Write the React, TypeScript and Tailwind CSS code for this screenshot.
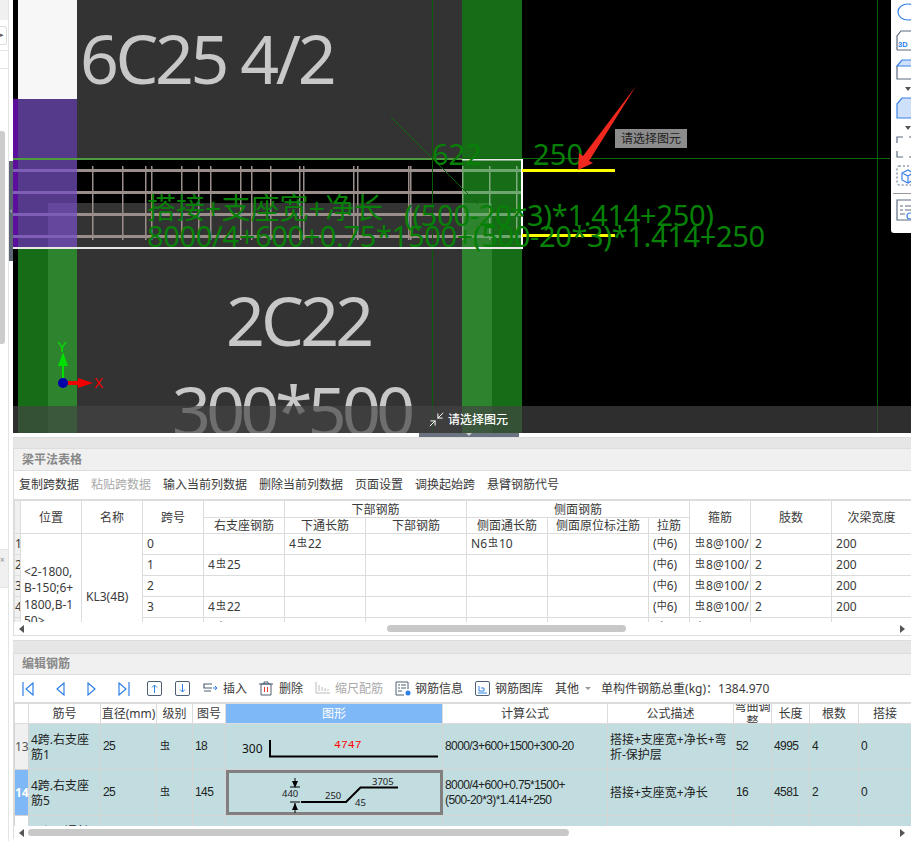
import { Minimize2 } from 'lucide-react';
import type { ReactNode } from 'react';

function Hrb() {
	return <span className="relative top-[-2px] mx-[1px] text-[10px]">虫</span>;
}
function Hpb() {
	return <span className="relative top-[-2px] text-[10px]">中</span>;
}

const verticals = [92, 122, 145, 151, 181, 198, 210, 240, 251, 270, 299, 303, 353, 357, 408, 410, 462, 489, 516];

function CadDrawing() {
	const rows = [170, 192, 214, 236];
	return (
		<svg className="block" width={898} height={433} viewBox="13 0 898 433">
			<rect x={13} y={0} width={898} height={433} fill="#000" />
			<rect x={18} y={0} width={59} height={99} fill="#f7f7f7" />
			<rect x={77} y={0} width={385} height={160} fill="#333" />
			<rect x={77} y={248} width={385} height={185} fill="#333" />
			<rect x={462} y={0} width={60} height={433} fill="#176c17" />
			<rect x={462} y={203} width={30} height={230} fill="#2e832e" />
			<rect x={18} y={248} width={30} height={185} fill="#176c17" />
			<rect x={48} y={248} width={29} height={185} fill="#2e832e" />
			<rect x={13} y={99} width={5} height={148} fill="#5b0f9c" />
			<rect x={18} y={99} width={59} height={148} fill="#553a8c" />
			<rect x={48} y={203} width={29} height={44} fill="#66479e" />
			<rect x={77} y={203} width={385} height={44} fill="#333" />

			{verticals.map((x) => (
				<rect key={x} x={x} y={166} width={1.5} height={74} fill={x >= 462 ? '#7fa97f' : '#9c8f8b'} />
			))}
			{rows.map((y) => (
				<g key={y}>
					<rect x={13} y={y - 1} width={64} height={3} fill="#7f5fb5" />
					<rect x={77} y={y - 1} width={385} height={3} fill="#9a8e8a" />
					<rect x={462} y={y - 1} width={60} height={3} fill="#6fa56f" />
				</g>
			))}

			<rect x={13} y={158} width={877} height={1} fill="#0a6a0a" />
			<rect x={13} y={158} width={449} height={2} fill="#4f9a3f" />
			<rect x={432} y={0} width={1} height={433} fill="#0a5c0a" />
			<rect x={877} y={0} width={1} height={433} fill="#0a5c0a" />
			<line x1={391} y1={117} x2={478} y2={204} stroke="#0a6a0a" strokeWidth={1} />

			<rect x={13} y={247} width={510} height={2} fill="#e8e8e8" />
			<rect x={462} y={159} width={61} height={1.5} fill="#e8e8e8" />
			<rect x={521} y={159} width={2} height={90} fill="#fff" />

			<rect x={522} y={169} width={93} height={3} fill="#ffff00" />
			<rect x={522} y={234} width={93} height={3} fill="#ffff00" />

			<g fontFamily="'Noto Sans', sans-serif" fill="#c8c8c8" fontSize={68}>
				<text x={80} y={84} letterSpacing={-3.4}>6C25 4/2</text>
				<text x={226} y={346} letterSpacing={-3.8}>2C22</text>
				<text x={172} y={436} letterSpacing={-4.6}>300*500</text>
			</g>

			<g fontFamily="'Noto Sans', 'Noto Sans CJK SC', sans-serif" fill="#078007" fontSize={29}>
				<text x={432} y={165}>622</text>
				<text x={533} y={165} textLength={50}>250</text>
				<text x={147} y={219}>搭接+支座宽+净长</text>
				<text x={404} y={226} textLength={310}>((500-20*3)*1.414+250)</text>
				<text x={147} y={247} textLength={618}>8000/4+600+0.75*1500+(500-20*3)*1.414+250</text>
			</g>

			<polygon points="636,86 589,161 593,163 578,170 579,153 583,156" fill="#f0281e" />

			{/* axis marker */}
			<rect x={62} y={358} width={2} height={25} fill="#00e000" />
			<polygon points="63,352 68,366 58,366" fill="#00e000" />
			<rect x={63} y={381} width={22} height={4} fill="#f00000" />
			<polygon points="93,383 78,378 78,388" fill="#f00000" />
			<circle cx={63} cy={383} r={5} fill="#0000a8" />
			<text x={57.5} y={352} fontSize={14} fill="#00e000" fontFamily="'Liberation Sans', sans-serif">Y</text>
			<text x={94} y={388} fontSize={14} fill="#f00000" fontFamily="'Liberation Sans', sans-serif">X</text>
		</svg>
	);
}

function SideTools() {
	const stroke = '#5b6b80';
	return (
		<svg width={20} height={233} viewBox="891 0 20 233">
			<ellipse cx={908} cy={12} rx={10} ry={8} fill="none" stroke="#3b82e8" strokeWidth={1.2} />
			<path d="M897 50V36l4-5h12M897 50h14" fill="none" stroke={stroke} strokeWidth={1.2} />
			<text x={898} y={47} fontSize={7.5} fontWeight={700} fill="#2b7de9" fontFamily="'Liberation Sans', sans-serif">3D</text>
			<path d="M897 66l5-6h10v6z" fill="#cfe0fa" stroke="#3b82e8" strokeWidth={1.2} />
			<path d="M897 66v13h14" fill="none" stroke={stroke} strokeWidth={1.2} />
			<polygon points="905,87 911,87 908,91" fill="#555" />
			<path d="M897 104l5-6h10v20h-15z" fill="#cfe0fa" stroke="#3b82e8" strokeWidth={1.2} />
			<polygon points="905,126 911,126 908,130" fill="#555" />
			<path d="M897 143v-6h6M897 151v6h6M909 137h3M909 157h3" fill="none" stroke={stroke} strokeWidth={1.2} />
			<rect x={897} y={166} width={20} height={19} rx={2} fill="none" stroke={stroke} strokeWidth={1} strokeDasharray="2 2" />
			<path d="M902 173l6-3 5 3v7l-5 3-6-3zM902 173l6 3 5-3M908 176v7" fill="none" stroke="#3b82e8" strokeWidth={1.2} />
			<rect x={893} y={193} width={18} height={1} fill="#999" />
			<path d="M911 200h-14v20h14" fill="none" stroke={stroke} strokeWidth={1.2} />
			<path d="M900 206h3M905 206h6M900 210h3M905 210h6M900 214h5" stroke={stroke} strokeWidth={1} />
			<circle cx={910} cy={216} r={3} fill="none" stroke="#3b82e8" strokeWidth={1.2} />
		</svg>
	);
}

function Viewport() {
	return (
		<div className="relative h-[433px] overflow-hidden">
			<CadDrawing />
			<div className="absolute bottom-0 left-0 right-0 flex h-[27px] items-center bg-[rgba(68,68,68,0.68)] pl-[415px]">
				<Minimize2 size={17} strokeWidth={1.4} className="mr-[3px] text-white" />
				<span className="text-[12px] font-medium text-white">请选择图元</span>
			</div>
			<div className="absolute left-[602px] top-[129px] bg-[#8c8c8c] px-[6px] text-[12px] leading-[19px] text-[#222]">
				请选择图元
			</div>
			<div className="absolute right-0 top-0 h-[233px] w-5 overflow-hidden rounded-bl-[3px] bg-white">
				<SideTools />
			</div>
		</div>
	);
}

function ScrollBar({ left, width }: { left: number; width: number }) {
	return (
		<div className="relative h-[13px] bg-white">
			<span className="absolute left-[5px] top-[3px] border-y-[4px] border-r-[5px] border-y-transparent border-r-[#555]" />
			<span className="absolute right-[6px] top-[3px] border-y-[4px] border-l-[5px] border-y-transparent border-l-[#555]" />
			<div className="absolute top-[3px] h-[7px] rounded-full bg-[#c8c8c8]" style={{ left, width }} />
		</div>
	);
}

const beamCols = [6, 61, 61, 61, 81, 81, 101, 81, 101, 41, 61, 81, 80];
const beamRows: { n: string; span: string; right?: ReactNode; through?: ReactNode; side?: ReactNode }[] = [
	{ n: '1', span: '0', through: <>4<Hrb />22</>, side: <>N6<Hrb />10</> },
	{ n: '2', span: '1', right: <>4<Hrb />25</> },
	{ n: '3', span: '2' },
	{ n: '4', span: '3', right: <>4<Hrb />22</> },
	{ n: '5', span: '4', right: <>4<Hrb />22</> },
	{ n: '6', span: '5' },
];

function BeamTable() {
	const th = 'border border-[#dcdcdc] px-1 text-center text-[12px] font-normal leading-[15px] text-[#3a3a3a]';
	const td = 'h-[21px] overflow-hidden whitespace-nowrap border border-[#dcdcdc] px-[4px] py-0 text-[12px] leading-[20px] text-[#3a3a3a]';
	return (
		<div className="h-[122px] overflow-hidden">
			<table className="w-[897px] table-fixed border-collapse">
				<colgroup>
					{beamCols.map((w, i) => (
						<col key={i} style={{ width: w }} />
					))}
				</colgroup>
				<thead>
					<tr className="h-[17px]">
						<th rowSpan={2} className={`${th} bg-[#f0f0f0]`} />
						<th rowSpan={2} className={th}>位置</th>
						<th rowSpan={2} className={th}>名称</th>
						<th rowSpan={2} className={th}>跨号</th>
						<th className={th} />
						<th colSpan={2} className={th}>下部钢筋</th>
						<th colSpan={3} className={th}>侧面钢筋</th>
						<th rowSpan={2} className={th}>箍筋</th>
						<th rowSpan={2} className={th}>肢数</th>
						<th rowSpan={2} className={th}>次梁宽度</th>
					</tr>
					<tr className="h-[16px]">
						<th className={th}>右支座钢筋</th>
						<th className={th}>下通长筋</th>
						<th className={th}>下部钢筋</th>
						<th className={th}>侧面通长筋</th>
						<th className={th}>侧面原位标注筋</th>
						<th className={th}>拉筋</th>
					</tr>
				</thead>
				<tbody>
					{beamRows.map((r, i) => (
						<tr key={r.n} className="h-[21px]">
							<td className={`${td} !px-0 bg-[#f0f0f0]`}>{r.n}</td>
							{i === 0 && (
								<>
									<td rowSpan={6} className="border border-[#dcdcdc] px-[3px] text-[12px] leading-[16.5px] text-[#3a3a3a]">
										&lt;2-1800,
										<br />
										B-150;6+
										<br />
										1800,B-1
										<br />
										50&gt;
									</td>
									<td rowSpan={6} className="border border-[#dcdcdc] px-[4px] text-[12px] text-[#3a3a3a]">KL3(4B)</td>
								</>
							)}
							<td className={td}>{r.span}</td>
							<td className={td}>{r.right}</td>
							<td className={td}>{r.through}</td>
							<td className={td} />
							<td className={td}>{r.side}</td>
							<td className={td} />
							<td className={td}>(<Hpb />6)</td>
							<td className={td}><Hrb />8@100/</td>
							<td className={td}>2</td>
							<td className={td}>200</td>
						</tr>
					))}
				</tbody>
			</table>
		</div>
	);
}

function BendShape() {
	return (
		<svg width={217} height={45} viewBox="225 723 217 45" className="block">
			<text x={241} y={752} fontSize={12} fill="#111" fontFamily="'Noto Sans', sans-serif">300</text>
			<path d="M269 739v16.5h168" fill="none" stroke="#000" strokeWidth={2} />
			<text x={333} y={747} fontSize={11.5} fill="#f00" fontFamily="'Liberation Mono', monospace">4747</text>
		</svg>
	);
}

function CrankShape() {
	return (
		<svg width={217} height={45} viewBox="225 769 217 45" className="block">
			<rect x={226.5} y={770.5} width={214} height={42} fill="none" stroke="#808080" strokeWidth={3} />
			<path d="M300 801h45l14.5-14.5H397" fill="none" stroke="#000" strokeWidth={2} />
			<path d="M294 777v8M289 786h10M294 802v10M289 801h10" stroke="#000" strokeWidth={1} fill="none" />
			<polygon points="294,787 291,780 297,780" fill="#000" />
			<polygon points="294,802 291,809 297,809" fill="#000" />
			<g fontSize={9.5} fill="#222" fontFamily="'Noto Sans', sans-serif">
				<text x={281} y={796}>440</text>
				<text x={324} y={798}>250</text>
				<text x={371} y={784}>3705</text>
				<text x={354} y={805}>45</text>
			</g>
		</svg>
	);
}

const barCols = [14, 72, 56, 36, 33, 217, 165, 126, 38, 38, 49, 53];

function BarTable() {
	const th = 'border border-[#dcdcdc] bg-white p-0 text-center text-[12px] font-normal leading-[15px] text-[#3a3a3a]';
	const td = 'border border-[#d4d4d4] bg-[#c1dde0] px-[2px] py-0 text-[12px] leading-[15px] text-[#222]';
	const num = `${td} tracking-[-0.6px] font-['Liberation_Sans',sans-serif]`;
	return (
		<div className="h-[123px] overflow-hidden">
			<table className="w-[897px] table-fixed border-collapse">
				<colgroup>
					{barCols.map((w, i) => (
						<col key={i} style={{ width: w }} />
					))}
				</colgroup>
				<thead>
					<tr className="h-[20px]">
						<th className={th} />
						<th className={th}>筋号</th>
						<th className={th}>直径(mm)</th>
						<th className={th}>级别</th>
						<th className={th}>图号</th>
						<th className="border border-[#dcdcdc] bg-[#7fb8f7] p-0 text-center text-[12px] font-normal leading-[15px] text-white">图形</th>
						<th className={th}>计算公式</th>
						<th className={th}>公式描述</th>
						<th className={th}>
							<div className="flex h-[19px] items-center justify-center overflow-hidden">弯曲调整</div>
						</th>
						<th className={th}>长度</th>
						<th className={th}>根数</th>
						<th className={th}>搭接</th>
					</tr>
				</thead>
				<tbody>
					<tr className="h-[46px]">
						<td className="border border-[#d4d4d4] bg-[#f0f0f0] p-0 text-center text-[12px] text-[#555]">13</td>
						<td className={td}>4跨.右支座<br />筋1</td>
						<td className={num}>25</td>
						<td className={td}><Hrb /></td>
						<td className={num}>18</td>
						<td className={`${td} !p-0`}><BendShape /></td>
						<td className={num}>8000/3+600+1500+300-20</td>
						<td className={td}>搭接+支座宽+净长+弯折-保护层</td>
						<td className={num}>52</td>
						<td className={num}>4995</td>
						<td className={num}>4</td>
						<td className={num}>0</td>
					</tr>
					<tr className="h-[46px]">
						<td className="border border-[#d4d4d4] bg-[#7fb8f7] p-0 text-center text-[12px] font-bold text-white">14</td>
						<td className={td}>4跨.右支座<br />筋5</td>
						<td className={num}>25</td>
						<td className={td}><Hrb /></td>
						<td className={num}>145</td>
						<td className={`${td} !p-0`}><CrankShape /></td>
						<td className={num}>8000/4+600+0.75*1500+<br />(500-20*3)*1.414+250</td>
						<td className={td}>搭接+支座宽+净长</td>
						<td className={num}>16</td>
						<td className={num}>4581</td>
						<td className={num}>2</td>
						<td className={num}>0</td>
					</tr>
					<tr className="h-[46px]">
						<td className="border border-[#d4d4d4] bg-white p-0" />
						<td className={td}>4跨.下通长<br />筋1</td>
						<td className={td} />
						<td className={td} />
						<td className={td} />
						<td className={td} />
						<td className={td} />
						<td className={td} />
						<td className={td} />
						<td className={td} />
						<td className={td} />
						<td className={td} />
					</tr>
				</tbody>
			</table>
		</div>
	);
}

const blue = '#2f80e6';
const slate = '#4f5f73';

function NavIcon({ d, w = 12 }: { d: string; w?: number }) {
	return (
		<svg width={w} height={14} viewBox={`0 0 ${w} 14`} fill="none" stroke={blue} strokeWidth={1.2}>
			<path d={d} />
		</svg>
	);
}

function BoxArrow({ up }: { up?: boolean }) {
	return (
		<svg width={15} height={15} viewBox="0 0 15 15" fill="none">
			<rect x={0.5} y={0.5} width={14} height={14} rx={1.5} stroke={slate} />
			<path d={up ? 'M7.5 12V4M5 6.5l2.5-2.5L10 6.5' : 'M7.5 3v8M5 8.5l2.5 2.5L10 8.5'} stroke={blue} />
		</svg>
	);
}

function BarToolbar() {
	return (
		<div className="flex h-[28px] items-center border-b border-[#dcdcdc] text-[12px] text-[#3a3a3a]">
			<div className="ml-[8px] flex items-center">
				<NavIcon d="M1 0v14M11 1L4 7l7 6z" />
			</div>
			<div className="ml-[22px] flex items-center">
				<NavIcon d="M8 1L1 7l7 6z" w={9} />
			</div>
			<div className="ml-[22px] flex items-center">
				<NavIcon d="M1 1l7 6-7 6z" w={9} />
			</div>
			<div className="ml-[22px] flex items-center">
				<NavIcon d="M11 0v14M1 1l7 6-7 6z" />
			</div>
			<div className="ml-[17px] flex items-center">
				<BoxArrow up />
			</div>
			<div className="ml-[13px] flex items-center">
				<BoxArrow />
			</div>
			<div className="ml-[13px] flex items-center gap-[5px]">
				<svg width={15} height={12} viewBox="0 0 15 12" fill="none">
					<path d="M9 1H1v4h8M1 8h7" stroke={slate} strokeWidth={1.2} />
					<path d="M10 5h4M12 3l2 2-2 2" stroke={blue} />
				</svg>
				<span>插入</span>
			</div>
			<div className="ml-[12px] flex items-center gap-[6px]">
				<svg width={14} height={15} viewBox="0 0 14 15" fill="none">
					<path d="M2 3h10v11H2zM0 3h14M5 3V1h4v2" stroke={slate} />
					<path d="M5.5 6v5M8.5 6v5" stroke="#e53935" />
				</svg>
				<span>删除</span>
			</div>
			<div className="ml-[12px] flex items-center gap-[5px] text-[#aaa]">
				<svg width={15} height={14} viewBox="0 0 15 14" fill="none" stroke="#bbb">
					<path d="M1 0v11h14M4 3v6M7 5v4M10 6v3M13 7v2" />
				</svg>
				<span>缩尺配筋</span>
			</div>
			<div className="ml-[12px] flex items-center gap-[3px]">
				<svg width={17} height={15} viewBox="0 0 17 15" fill="none">
					<path d="M13 8V1H1v13h8" stroke={slate} />
					<path d="M3 4h2M6 4h5M3 7h2M6 7h5M3 10h4" stroke={slate} />
					<circle cx={13} cy={12} r={2.5} fill={blue} />
				</svg>
				<span>钢筋信息</span>
			</div>
			<div className="ml-[12px] flex items-center gap-[5px]">
				<svg width={15} height={15} viewBox="0 0 15 15" fill="none">
					<rect x={0.5} y={0.5} width={14} height={14} rx={1.5} stroke={slate} />
					<path d="M4 5v5h5V7H6M3 12h9" stroke={blue} />
				</svg>
				<span>钢筋图库</span>
			</div>
			<span className="ml-[12px]">其他</span>
			<span className="ml-[6px] border-x-[3px] border-t-[3px] border-x-transparent border-t-[#999]" />
			<span className="ml-[10px]">单构件钢筋总重(kg)：1384.970</span>
		</div>
	);
}

const beamTools = ['复制跨数据', '粘贴跨数据', '输入当前列数据', '删除当前列数据', '页面设置', '调换起始跨', '悬臂钢筋代号'];

export default function App() {
	return (
		<div className="flex h-[841px] w-[911px] overflow-hidden bg-white font-['Noto_Sans','Noto_Sans_CJK_SC',sans-serif]">
			{/* collapsed left dock */}
			<div className="relative w-[13px] shrink-0">
				<div className="h-[20px] w-[8px] bg-[#f0f0f0]" />
				<div className="mt-[6px] flex h-[19px] w-[7px] items-center rounded-r-[3px] border border-l-0 border-[#ddd] text-[7px] text-[#555]">▸</div>
				<div className="mt-[5px] h-px w-[8px] bg-[#e4e4e4]" />
				<div className="mt-[17px] h-px w-[8px] bg-[#e4e4e4]" />
				<div className="mt-[62px] h-[213px] w-[5px] rounded-r-[3px] bg-[#ccc]" />
				<div className="absolute bottom-0 left-[8px] top-0 w-px bg-[#e4e4e4]" />
				<div className="absolute left-[9px] top-[161px] flex h-[100px] w-[4px] items-center justify-center bg-[#5d6773] text-[7px] text-[#ddd]">‹</div>
				<div className="absolute left-0 top-[549px] h-[39px] w-[8px] border-y border-[#e4e4e4] bg-[#f0f0f0] pt-[6px] text-[8px] leading-none text-[#888]">×</div>
			</div>

			<div className="flex min-w-0 flex-1 flex-col">
				<Viewport />
				<div className="h-[4px] bg-white pl-[406px]">
					<div className="flex h-[4px] w-[100px] justify-center bg-[#6b7280]">
						<span className="border-x-[3px] border-t-[3px] border-x-transparent border-t-[#ccc]" />
					</div>
				</div>
				<div className="h-[11px] border-t border-[#ddd] bg-[#e6e6e6]" />

				<section className="border-l border-[#ddd]">
					<div className="flex h-[23px] items-center border-y border-[#ddd] bg-[#f0f0f0] pl-[8px] text-[12px] font-bold text-[#888]">
						梁平法表格
					</div>
					<div className="flex h-[29px] items-center gap-[12px] border-b border-[#dcdcdc] pl-[5px] text-[12px] text-[#3a3a3a]">
						{beamTools.map((t, i) => (
							<span key={t} className={i === 1 ? 'text-[#aaa]' : ''}>{t}</span>
						))}
					</div>
					<BeamTable />
					<ScrollBar left={373} width={239} />
				</section>
				<div className="h-[5px] border-t border-[#ddd] bg-white" />
				<div className="h-[13px] border-t border-[#ddd] bg-[#e6e6e6]" />

				<section className="border-l border-[#ddd]">
					<div className="flex h-[22px] items-center border-y border-[#ddd] bg-[#f0f0f0] pl-[8px] text-[12px] font-bold text-[#888]">
						编辑钢筋
					</div>
					<BarToolbar />
					<BarTable />
					<ScrollBar left={14} width={541} />
				</section>
			</div>
		</div>
	);
}
